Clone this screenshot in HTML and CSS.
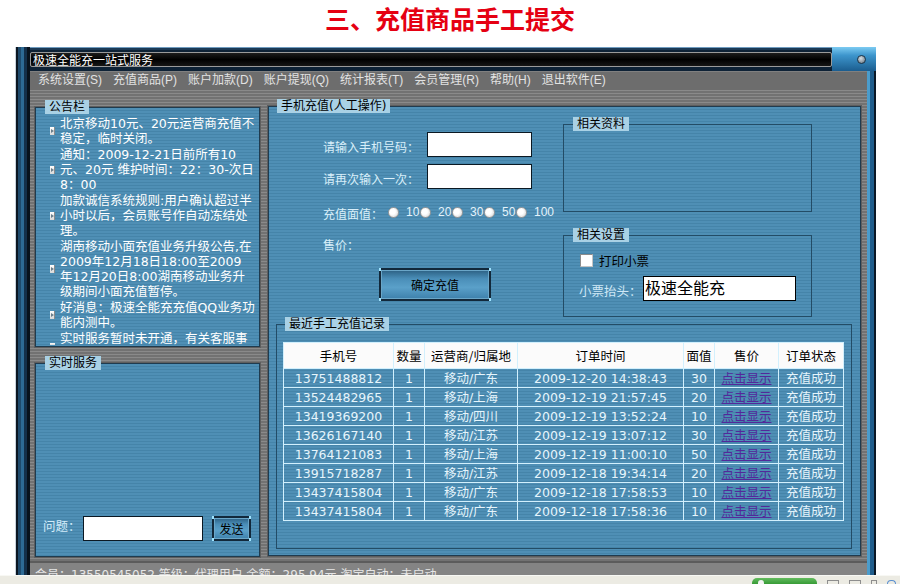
FILE: index.html
```html
<!DOCTYPE html>
<html lang="zh-CN">
<head>
<meta charset="utf-8">
<title>充值商品手工提交</title>
<link rel="stylesheet" href="styles.css">
</head>
<body>
<h1 class="page-title">三、充值商品手工提交</h1>
<div class="window">
  <div class="titlebar">
    <div class="title-field">极速全能充一站式服务</div>
    <div class="title-right"><span class="close-btn"></span></div>
  </div>
  <div class="menubar">
    <span>系统设置(S)</span>
    <span>充值商品(P)</span>
    <span>账户加款(D)</span>
    <span>账户提现(Q)</span>
    <span>统计报表(T)</span>
    <span>会员管理(R)</span>
    <span>帮助(H)</span>
    <span>退出软件(E)</span>
  </div>
  <div class="client">
    <div class="left-col">
      <fieldset class="group panel notice-group">
        <legend>公告栏</legend>
        <div class="notice-list">
          <div class="notice"><span class="bullet"></span><div class="notice-text">北京移动10元、20元运营商充值不<br>稳定，临时关闭。</div></div>
          <div class="notice"><span class="bullet"></span><div class="notice-text">通知：2009-12-21日前所有10<br>元、20元 维护时间：22：30-次日<br>8：00</div></div>
          <div class="notice"><span class="bullet"></span><div class="notice-text">加款诚信系统规则:用户确认超过半<br>小时以后，会员账号作自动冻结处<br>理。</div></div>
          <div class="notice"><span class="bullet"></span><div class="notice-text">湖南移动小面充值业务升级公告,在<br>2009年12月18日18:00至2009<br>年12月20日8:00湖南移动业务升<br>级期间小面充值暂停。</div></div>
          <div class="notice"><span class="bullet"></span><div class="notice-text">好消息：极速全能充充值QQ业务功<br>能内测中。</div></div>
          <div class="notice"><span class="bullet cut"></span><div class="notice-text">实时服务暂时未开通，有关客服事</div></div>
        </div>
      </fieldset>
      <fieldset class="group panel service-group">
        <legend>实时服务</legend>
        <div class="service-body">
          <span class="q-label">问题：</span>
          <span class="field q-input"></span>
          <span class="btn send">发送</span>
        </div>
      </fieldset>
    </div>
    <fieldset class="group panel main-group">
      <legend>手机充值(人工操作)</legend>
      <div class="main-top">
        <div class="form">
          <div class="frow"><span class="flabel">请输入手机号码：</span><span class="field phone"></span></div>
          <div class="frow"><span class="flabel">请再次输入一次：</span><span class="field phone"></span></div>
          <div class="frow radio-row">
            <span class="flabel short">充值面值：</span>
            <span class="opt"><span class="radio"></span><span class="opt-text">10</span></span>
            <span class="opt"><span class="radio"></span><span class="opt-text">20</span></span>
            <span class="opt"><span class="radio"></span><span class="opt-text">30</span></span>
            <span class="opt"><span class="radio"></span><span class="opt-text">50</span></span>
            <span class="opt"><span class="radio"></span><span class="opt-text">100</span></span>
          </div>
          <div class="frow price-row"><span class="flabel">售价：</span></div>
          <div class="btn confirm">确定充值</div>
        </div>
        <div class="side">
          <fieldset class="group inner info-group">
            <legend>相关资料</legend>
            <div class="info-body"></div>
          </fieldset>
          <fieldset class="group inner settings-group">
            <legend>相关设置</legend>
            <div class="settings-body">
              <div class="check-row"><span class="checkbox"></span><span>打印小票</span></div>
              <div class="ticket-row"><span class="ticket-label">小票抬头：</span><span class="field ticket-input">极速全能充</span></div>
            </div>
          </fieldset>
        </div>
      </div>
      <fieldset class="group inner records">
        <legend>最近手工充值记录</legend>
        <div class="records-body">
          <table class="grid">
            <colgroup>
              <col class="c-phone"><col class="c-qty"><col class="c-op"><col class="c-time"><col class="c-val"><col class="c-price"><col class="c-state">
            </colgroup>
            <thead>
              <tr><th>手机号</th><th>数量</th><th>运营商/归属地</th><th>订单时间</th><th>面值</th><th>售价</th><th>订单状态</th></tr>
            </thead>
            <tbody>
              <tr><td>13751488812</td><td>1</td><td>移动/广东</td><td>2009-12-20 14:38:43</td><td>30</td><td><span class="link">点击显示</span></td><td>充值成功</td></tr>
              <tr><td>13524482965</td><td>1</td><td>移动/上海</td><td>2009-12-19 21:57:45</td><td>20</td><td><span class="link">点击显示</span></td><td>充值成功</td></tr>
              <tr><td>13419369200</td><td>1</td><td>移动/四川</td><td>2009-12-19 13:52:24</td><td>10</td><td><span class="link">点击显示</span></td><td>充值成功</td></tr>
              <tr><td>13626167140</td><td>1</td><td>移动/江苏</td><td>2009-12-19 13:07:12</td><td>30</td><td><span class="link">点击显示</span></td><td>充值成功</td></tr>
              <tr><td>13764121083</td><td>1</td><td>移动/上海</td><td>2009-12-19 11:00:10</td><td>50</td><td><span class="link">点击显示</span></td><td>充值成功</td></tr>
              <tr><td>13915718287</td><td>1</td><td>移动/江苏</td><td>2009-12-18 19:34:14</td><td>20</td><td><span class="link">点击显示</span></td><td>充值成功</td></tr>
              <tr><td>13437415804</td><td>1</td><td>移动/广东</td><td>2009-12-18 17:58:53</td><td>10</td><td><span class="link">点击显示</span></td><td>充值成功</td></tr>
              <tr><td>13437415804</td><td>1</td><td>移动/广东</td><td>2009-12-18 17:58:36</td><td>10</td><td><span class="link">点击显示</span></td><td>充值成功</td></tr>
            </tbody>
          </table>
        </div>
      </fieldset>
    </fieldset>
  </div>
  <div class="statusbar">会员：13550545052 等级：代理用户 余额：295.94元 淘宝自动：未启动</div>
</div>
<div class="taskbar">
  <span class="task-green"><span class="task-dot"></span></span>
  <span class="tray-icon"></span>
  <span class="tray-icon"></span>
  <span class="tray-icon small"></span>
  <span class="tray-icon round"></span>
</div>
</body>
</html>
```

FILE: styles.css
```css
* { box-sizing: border-box; }
html, body { margin: 0; padding: 0; }
body {
  width: 900px;
  height: 584px;
  overflow: hidden;
  background: #fff;
  font-family: "DejaVu Sans", "Noto Sans CJK SC", sans-serif;
  font-size: 12px;
}

.page-title {
  margin: 0;
  height: 47px;
  padding-top: 5px;
  text-align: center;
  font-family: "Noto Sans CJK SC", sans-serif;
  font-size: 25px;
  line-height: 26px;
  font-weight: 700;
  color: #e50012;
}

/* ---------- window frame ---------- */
.window {
  margin-left: 15px;
  width: 861px;
  height: 528px;
  overflow: hidden;
  padding: 5px 9px 0 15px;
  display: flex;
  flex-direction: column;
  background:
    linear-gradient(to bottom, #7ccbf2 0, #3d95cc 35%, #1b5d8f 100%) right 0 top 0 / 44px 24px no-repeat,
    linear-gradient(to right, #4a9ccc 0 3px, #1f5d8c 3px 7px, #0b1826 7px 9px) right 0 top 0 / 9px 100% no-repeat,
    linear-gradient(to right, #c9d3dc 0 1px, #0b1622 1px 3px, #1e4a6c 3px 6px, #2d6a94 6px 9px, #14304a 9px 12px, #08121c 12px 15px) left 0 top 0 / 15px 100% no-repeat,
    linear-gradient(to bottom, #6f9cc0 0 1px, #1c3a55 1px 3px, #0e2236 3px);
}

.titlebar { height: 15px; display: flex; flex: none; }
.title-field {
  width: 802px;
  height: 15px;
  background: linear-gradient(#1c1c1c, #000 50%, #161616);
  border: 1px solid #9a9a9a;
  border-radius: 2px;
  color: #fff;
  font-family: "Noto Sans CJK SC", sans-serif;
  font-size: 12px;
  line-height: 13px;
  padding-left: 2px;
}
.title-right {
  flex: 1;
  display: flex;
  align-items: center;
  justify-content: flex-end;
  padding-right: 1px;
}
.close-btn {
  width: 9px;
  height: 9px;
  border-radius: 50%;
  background: radial-gradient(circle at 40% 35%, #d6dee4, #5f6e79);
  border: 1px solid #1b3346;
}

.menubar {
  margin-top: 4px;
  height: 19px;
  flex: none;
  display: flex;
  gap: 11px;
  padding-left: 8px;
  background: #6d6d6d;
  border-top: 1px solid #808080;
  color: #e2e2e2;
  font-family: "Liberation Sans", "Noto Sans CJK SC", sans-serif;
  font-size: 12px;
  line-height: 17px;
}

/* ---------- client area ---------- */
.client {
  height: 471px;
  flex: none;
  display: flex;
  gap: 8px;
  padding: 0 6px 0 5px;
  background: repeating-linear-gradient(to bottom, #8a8a8a 0 1px, #727272 1px 3px);
}

.group {
  margin: 0;
  min-width: 0;
  border: 1px solid #1f3b4f;
}
.group > legend {
  height: 14px;
  padding: 0 4px;
  background: #a9d1e5;
  color: #000;
  font-family: "DejaVu Sans", "Noto Sans CJK SC", sans-serif;
  font-size: 12px;
  line-height: 14px;
}
.panel {
  background: repeating-linear-gradient(to bottom, #4f8fb5 0 2px, #4584a9 2px 3px);
  box-shadow: 0 0 0 1px #5e5e5e;
}
.inner { border-color: #234c66; }

/* left column */
.left-col { width: 225px; flex: none; display: flex; flex-direction: column; }

.notice-group { margin-top: 10px; padding: 0 4px 0 8px; }
.notice-group > legend { margin-left: 1px; }
.notice-list {
  height: 232px;
  overflow: hidden;
  padding: 2px 0 0 6px;
  display: flex;
  flex-direction: column;
  gap: 1px;
}
.notice {
  display: flex;
  align-items: center;
  gap: 5px;
  flex: none;
  color: #fff;
  font-size: 12.5px;
  line-height: 15px;
  white-space: nowrap;
}
.bullet {
  flex: none;
  width: 5px;
  height: 8px;
  background: linear-gradient(#ffffff, #d8d8d8);
  border-right: 1px solid #8a8a8a;
  display: flex;
  align-items: center;
}
.bullet::after {
  content: "";
  border-left: 3px solid #6a7f8c;
  border-top: 2px solid transparent;
  border-bottom: 2px solid transparent;
  margin-left: 1px;
}
.bullet.cut {
  align-self: flex-end;
  height: 2px;
  margin-bottom: 1px;
  border-right: none;
}
.bullet.cut::after { display: none; }

.service-group { margin-top: 9px; padding: 0 4px 0 7px; }
.service-group > legend { margin-left: 2px; }
.service-body {
  height: 186px;
  display: flex;
  align-items: flex-end;
  padding-bottom: 15px;
}
.q-label {
  width: 40px;
  color: #d3ecf9;
  font-size: 12.5px;
  line-height: 28px;
}
.field {
  display: block;
  background: #fff;
  border: 1px solid #0b1822;
}
.q-input { width: 120px; height: 25px; }

.btn {
  display: flex;
  align-items: center;
  justify-content: center;
  color: #000;
  font-size: 12px;
  border: 2px solid #12283a;
  box-shadow: inset 0 0 0 1px #6aa6c8;
  background: linear-gradient(#2b5f82, #4a8eb8 30%, #5aa0c9 60%, #3d80ab);
  position: relative;
}
.btn::before, .btn::after {
  content: "";
  position: absolute;
  top: -2px;
  bottom: -2px;
  width: 2px;
  background: linear-gradient(#9fe4ff 0 3px, transparent 3px calc(100% - 3px), #9fe4ff calc(100% - 3px));
}
.btn::before { left: -2px; }
.btn::after { right: -2px; }
.send { margin-left: 9px; width: 39px; height: 25px; }

/* main panel */
.main-group {
  flex: 1;
  align-self: flex-start;
  margin-top: 9px;
  padding: 0 8px 6px 7px;
}
.main-group > legend { margin-left: 1px; }
.main-top { height: 204px; display: flex; }

.form { width: 287px; flex: none; padding: 19px 0 0 47px; }
.frow {
  display: flex;
  align-items: center;
  height: 25px;
  color: #d9effa;
  font-size: 12px;
}
.frow + .frow { margin-top: 7px; }
.flabel { width: 104px; flex: none; padding-top: 3px; }
.flabel.short { width: 65px; }
.phone { width: 105px; height: 25px; }
.radio-row { margin-top: 14px !important; height: 18px; }
.opt { display: flex; align-items: center; width: 32px; flex: none; }
.radio {
  width: 11px;
  height: 11px;
  flex: none;
  border-radius: 50%;
  background: radial-gradient(circle at 40% 40%, #ffffff 35%, #cfcfcf 100%);
  border: 1px solid #9a9a9a;
}
.opt-text {
  margin-left: 7px;
  font-family: "Liberation Sans", sans-serif;
  font-size: 12px;
  color: #e4f3fb;
}
.price-row { margin-top: 13px !important; height: 18px; }
.confirm { margin: 16px 0 0 56px; width: 112px; height: 33px; }

.side { width: 249px; flex: none; padding-top: 4px; }
.info-group { padding: 0; }
.info-group > legend, .settings-group > legend { margin-left: 9px; }
.info-body { height: 80px; }
.settings-group { margin-top: 16px; padding: 0; }
.settings-body { height: 74px; padding: 12px 0 0 16px; }
.check-row {
  display: flex;
  align-items: center;
  gap: 6px;
  height: 13px;
  color: #000;
  font-size: 12.5px;
}
.checkbox {
  width: 13px;
  height: 13px;
  background: #fff;
  border: 1px solid #c4c4c4;
  border-top-color: #8c8c8c;
  border-left-color: #8c8c8c;
}
.ticket-row {
  margin: 9px 0 0 -1px;
  display: flex;
  align-items: center;
  height: 25px;
}
.ticket-label { width: 64px; color: #cfe8f6; font-size: 12.5px; padding-top: 3px; }
.ticket-input {
  width: 153px;
  height: 25px;
  border-color: #000;
  padding-left: 1px;
  color: #000;
  font-family: "Noto Sans CJK SC", sans-serif;
  font-size: 16px;
  line-height: 21px;
}

/* records */
.records { padding: 0 8px 0 6px; }
.records > legend { margin-left: 2px; }
.records-body { height: 217px; padding-top: 11px; }
.grid {
  width: 560px;
  border-collapse: collapse;
  table-layout: fixed;
}
.c-phone { width: 110px; }
.c-qty { width: 31px; }
.c-op { width: 93px; }
.c-time { width: 166px; }
.c-val { width: 31px; }
.c-price { width: 64px; }
.c-state { width: 65px; }
.grid th, .grid td {
  border: 1px solid #d2f0fd;
  padding: 0;
  text-align: center;
  white-space: nowrap;
  overflow: hidden;
}
.grid th {
  height: 26px;
  background: #fbfbfb;
  color: #000;
  font-weight: normal;
  font-family: "Noto Sans CJK SC", sans-serif;
  font-size: 12.5px;
}
.grid td {
  height: 19px;
  line-height: 17px;
  color: #e6f5fc;
  font-size: 12.5px;
}
.link {
  color: #53289a;
  text-decoration: underline;
  font-family: "Noto Sans CJK SC", sans-serif;
  font-size: 12.5px;
}

/* status bar */
.statusbar {
  height: 14px;
  flex: none;
  padding: 5px 0 0 5px;
  background: #848484;
  border-top: 2px solid #5c5c5c;
  color: #e6e6e6;
  font-size: 12px;
  line-height: 14px;
  white-space: nowrap;
}

/* bottom strip */
.taskbar {
  height: 9px;
  background: #ecebe3;
  border-top: 1px solid #f8f8f4;
  display: flex;
  align-items: flex-end;
  padding-left: 752px;
  gap: 10px;
}
.task-green {
  width: 65px;
  height: 6px;
  border-radius: 5px 5px 0 0;
  background: linear-gradient(#63bb5e, #379b36);
  display: flex;
  padding-left: 6px;
  align-items: flex-end;
}
.task-dot { width: 6px; height: 4px; border-radius: 3px 3px 0 0; background: #f4f4f4; }
.tray-icon {
  width: 12px;
  height: 4px;
  border: 1px solid #8e8e8e;
  border-bottom: none;
}
.tray-icon.small { width: 6px; }
.tray-icon.round { width: 9px; border-radius: 5px 5px 0 0; border-color: #5a8fd0; }
```
